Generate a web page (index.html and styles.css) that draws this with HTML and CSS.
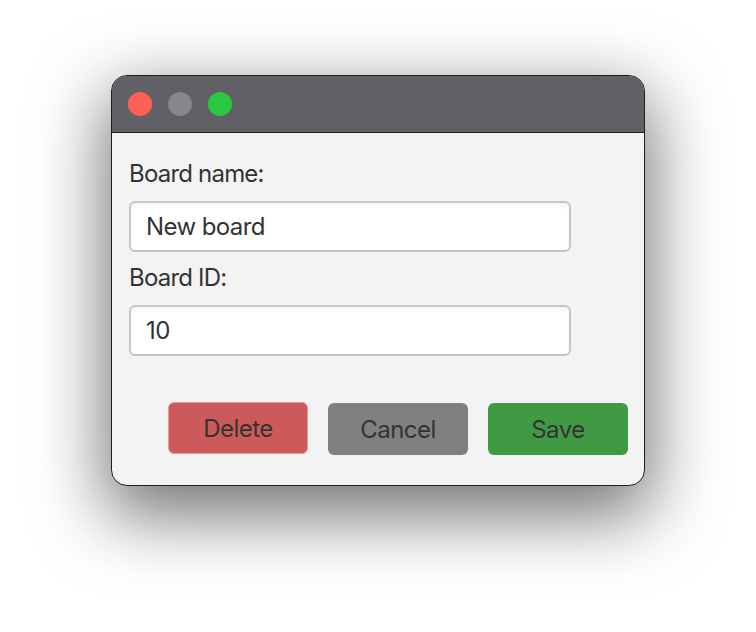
FILE: index.html
```html
<!DOCTYPE html>
<html lang="en">
<head>
    <meta charset="UTF-8">
    <meta name="viewport" content="width=device-width, initial-scale=1.0">
    <title>Board</title>
    <link rel="stylesheet" href="styles.css">
</head>
<body>
    <div class="window">
        <div class="titlebar">
            <span class="light red"></span>
            <span class="light gray"></span>
            <span class="light green"></span>
        </div>
        <div class="content">
            <label class="field-label" for="boardName">Board name:</label>
            <input type="text" id="boardName" class="field" value="New board">
            <label class="field-label second" for="boardId">Board ID:</label>
            <input type="text" id="boardId" class="field" value="10">
            <div class="actions">
                <button class="btn delete">Delete</button>
                <button class="btn cancel">Cancel</button>
                <button class="btn save">Save</button>
            </div>
        </div>
    </div>
</body>
</html>
```

FILE: styles.css
```css
body {
    background-color: white;
    font-family: Inter, "Noto Sans", sans-serif;
    margin: 0;
    height: 632px;
    overflow: hidden;
    display: flex;
    justify-content: center;
    align-items: flex-start;
}
.window {
    margin-top: 75px;
    width: 534px;
    box-sizing: border-box;
    border: 1px solid #1e1e1e;
    border-radius: 16px;
    overflow: hidden;
    background-color: #f3f3f3;
    box-shadow: 0 24px 70px 6px rgba(0,0,0,0.55);
}
.titlebar {
    height: 56px;
    background-color: #616066;
    border-bottom: 1px solid #1e1e1e;
    display: flex;
    align-items: center;
    gap: 16px;
    padding-left: 16px;
}
.light {
    width: 24px;
    height: 24px;
    border-radius: 50%;
}
.red { background-color: #fe5f57; }
.gray { background-color: #87868d; }
.green { background-color: #2ac840; }
.content {
    padding: 27px 16px 30px 17px;
    display: flex;
    flex-direction: column;
    align-items: flex-start;
}
.field-label {
    font-size: 24px;
    line-height: 28px;
    color: #333;
    margin-bottom: 13px;
    letter-spacing: -0.8px;
}
.field-label.second {
    margin-top: 12px;
}
.field {
    width: 442px;
    height: 51px;
    box-sizing: border-box;
    border: 2px solid #c6c6c6;
    border-radius: 6px;
    background-color: white;
    box-shadow: inset 0 4px 5px -2px rgba(0,0,0,0.05);
    padding: 0 15px;
    font-family: inherit;
    font-size: 24px;
    letter-spacing: -0.6px;
    color: #333;
    outline: none;
}
.actions {
    align-self: stretch;
    display: flex;
    justify-content: flex-end;
    gap: 20px;
    margin-top: 47px;
}
.btn {
    width: 140px;
    height: 52px;
    border: none;
    border-radius: 6px;
    font-family: inherit;
    font-size: 24px;
    letter-spacing: -0.5px;
    color: #333;
    cursor: pointer;
}
.delete {
    background-color: #cd5a5a;
    border: 1px solid #e49a9a;
    margin-top: -1px;
}
.cancel { background-color: #808080; }
.save { background-color: #409a44; }
```
